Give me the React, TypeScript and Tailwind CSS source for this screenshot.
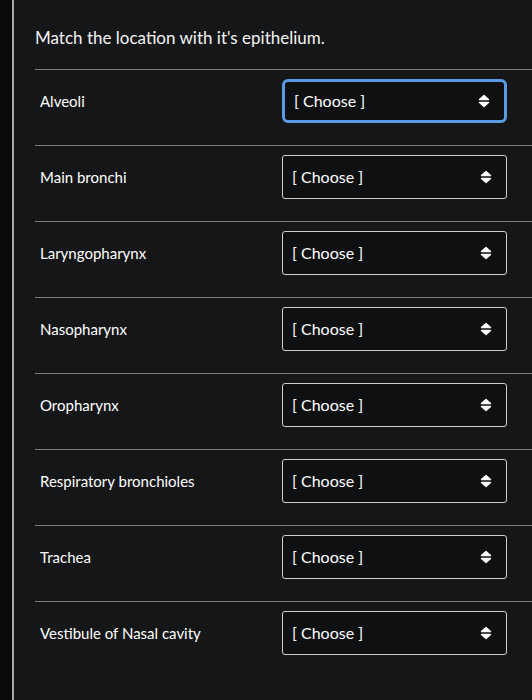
const rows = [
  'Alveoli',
  'Main bronchi',
  'Laryngopharynx',
  'Nasopharynx',
  'Oropharynx',
  'Respiratory bronchioles',
  'Trachea',
  'Vestibule of Nasal cavity',
]

function Arrows() {
  return (
    <svg width="12" height="14" viewBox="0 0 12 14" className="shrink-0">
      <path d="M6 1.5 L10.5 5.5 H1.5 Z" fill="#fff" stroke="#fff" strokeWidth="1.4" strokeLinejoin="round" />
      <path d="M1.5 8.5 H10.5 L6 12.5 Z" fill="#fff" stroke="#fff" strokeWidth="1.4" strokeLinejoin="round" />
    </svg>
  )
}

export default function App() {
  return (
    <div
      className="min-h-screen h-[700px] flex bg-[#0b0b0c] overflow-hidden"
      style={{ fontFamily: 'Lato, "Open Sans", sans-serif' }}
    >
      <div className="w-[12px] shrink-0" />
      <div className="flex-1 border-l-2 border-[#a8a8a8] bg-[#151617] pl-[21px] pt-[26px]">
        {/* question */}
        <p className="text-[17px] leading-6 text-[#f4f4f4] mb-[19px]">
          Match the location with it's epithelium.
        </p>

        {/* rows */}
        <div>
          {rows.map((label, i) => (
            <div key={label} className="h-[76px] border-t border-[#7c7c7c] flex items-start pt-[9px]">
              <div className="w-[247px] h-[44px] pl-[5px] flex items-center text-[15px] text-white">
                {label}
              </div>
              <div
                className={`w-[225px] h-[44px] flex items-center justify-between pl-[9px] pr-[14px] bg-[#0f1011] ${
                  i === 0
                    ? 'border-[3px] border-[#5b9be6] rounded-[6px]'
                    : 'border border-[#cfcfcf] rounded-[3px]'
                }`}
              >
                <span className="text-[16px] text-white">[ Choose ]</span>
                <Arrows />
              </div>
            </div>
          ))}
        </div>
      </div>
    </div>
  )
}
